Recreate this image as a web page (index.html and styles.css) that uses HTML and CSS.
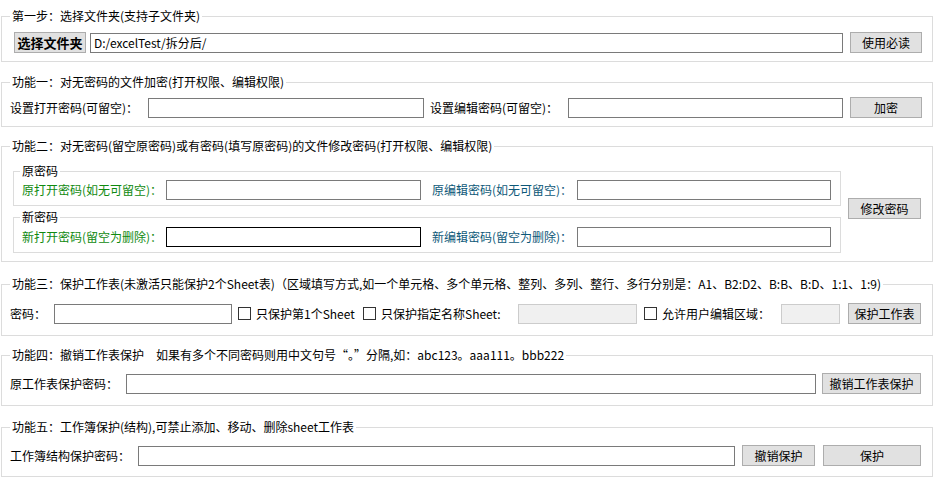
FILE: index.html
```html
<!DOCTYPE html>
<html lang="zh-CN">
<head>
<meta charset="utf-8">
<title>Excel 密码工具</title>
<link rel="stylesheet" href="styles.css">
</head>
<body>
<div class="page">

  <fieldset class="group g1">
    <legend>第一步：选择文件夹(支持子文件夹)</legend>
    <div class="row">
      <button class="btn btn-pick">选择文件夹</button>
      <input class="tb tb-path" type="text" value="D:/excelTest/拆分后/">
      <button class="btn btn-72 gap7">使用必读</button>
    </div>
  </fieldset>

  <fieldset class="group g2">
    <legend>功能一：对无密码的文件加密(打开权限、编辑权限)</legend>
    <div class="row">
      <span class="lbl w138">设置打开密码(可留空)：</span>
      <input class="tb w276" type="text">
      <span class="lbl w138 gap6">设置编辑密码(可留空)：</span>
      <input class="tb grow" type="text">
      <button class="btn btn-72 gap7">加密</button>
    </div>
  </fieldset>

  <fieldset class="group g3">
    <legend>功能二：对无密码(留空原密码)或有密码(填写原密码)的文件修改密码(打开权限、编辑权限)</legend>
    <div class="row">
      <div class="inner-col">
        <fieldset class="inner">
          <legend>原密码</legend>
          <div class="row inner-row">
            <span class="lbl w144 green">原打开密码(如无可留空)：</span>
            <input class="tb w255" type="text">
            <span class="lbl w145 gap11 teal">原编辑密码(如无可留空)：</span>
            <input class="tb w254" type="text">
          </div>
        </fieldset>
        <fieldset class="inner inner-2">
          <legend>新密码</legend>
          <div class="row inner-row inner-row-2">
            <span class="lbl w144 green">新打开密码(留空为删除)：</span>
            <input class="tb w255 tb-focus" type="text">
            <span class="lbl w145 gap11 teal">新编辑密码(留空为删除)：</span>
            <input class="tb w254" type="text">
          </div>
        </fieldset>
      </div>
      <button class="btn btn-73 gap7">修改密码</button>
    </div>
  </fieldset>

  <fieldset class="group g4">
    <legend>功能三：保护工作表(未激活只能保护2个Sheet表)（区域填写方式,如一个单元格、多个单元格、整列、多列、整行、多行分别是：A1、B2:D2、B:B、B:D、1:1、1:9)</legend>
    <div class="row">
      <span class="lbl w44">密码：</span>
      <input class="tb w178" type="text">
      <label class="chk w125 gap6"><input class="cb" type="checkbox">只保护第1个Sheet</label>
      <label class="chk w155"><input class="cb" type="checkbox">只保护指定名称Sheet:</label>
      <input class="tb tb-off w119" type="text" disabled>
      <label class="chk w137 gap7"><input class="cb" type="checkbox">允许用户编辑区域：</label>
      <input class="tb tb-off w59" type="text" disabled>
      <button class="btn btn-73 gap8">保护工作表</button>
    </div>
  </fieldset>

  <fieldset class="group g5">
    <legend>功能四：撤销工作表保护　如果有多个不同密码则用中文句号“。”分隔,如：abc123。aaa111。bbb222</legend>
    <div class="row">
      <span class="lbl w116">原工作表保护密码：</span>
      <input class="tb grow" type="text">
      <button class="btn btn-99 gap6">撤销工作表保护</button>
    </div>
  </fieldset>

  <fieldset class="group g6">
    <legend>功能五：工作簿保护(结构),可禁止添加、移动、删除sheet工作表</legend>
    <div class="row">
      <span class="lbl w128">工作簿结构保护密码：</span>
      <input class="tb w597" type="text">
      <button class="btn btn-73 gap7">撤销保护</button>
      <button class="btn btn-98 gap8">保护</button>
    </div>
  </fieldset>

</div>
</body>
</html>
```

FILE: styles.css
```css
* {
  box-sizing: border-box;
}

html,
body {
  margin: 0;
  padding: 0;
  background: #ffffff;
}

body {
  font-family: "Noto Sans CJK SC", "Liberation Sans", sans-serif;
  font-size: 12px;
  line-height: 14px;
  color: #000000;
}

.page {
  width: 934px;
  padding: 9px 1px 0 1px;
}

/* group boxes */
.group {
  margin: 0;
  padding: 0;
  min-width: 0;
  border: 1px solid #dcdcdc;
}

.group > legend {
  margin-left: 8px;
  padding: 0 2px;
  height: 14px;
  line-height: 14px;
  white-space: nowrap;
}

.g2 { margin-top: 13px; }
.g3 { margin-top: 12px; }
.g4 { margin-top: 15px; }
.g5 { margin-top: 12px; }
.g6 { margin-top: 14px; }

.row {
  display: flex;
  align-items: center;
}

.g1 > .row { padding: 9px 10px 8px 10px; }
.g2 > .row { padding: 8px 10px 8px 8px; }
.g3 > .row { padding: 11px 11px 8px 11px; }
.g4 > .row { padding: 12px 11px 11px 8px; }
.g5 > .row { padding: 11px 11px 11px 8px; }
.g6 > .row { padding: 11px 11px 10px 8px; }

/* nested group boxes */
.inner-col {
  width: 828px;
  display: flex;
  flex-direction: column;
}

.inner {
  margin: 0;
  padding: 0;
  min-width: 0;
  border: 1px solid #dcdcdc;
}

.inner > legend {
  margin-left: 6px;
  padding: 0 2px;
  height: 14px;
  line-height: 14px;
}

.inner-2 {
  margin-top: 4px;
}

.inner-row {
  padding: 2px 9px 5px 8px;
}

.inner-row-2 {
  padding-top: 3px;
}

/* labels */
.lbl {
  white-space: nowrap;
  flex: none;
}

.green { color: #108a10; }
.teal { color: #0d5878; }

.chk {
  display: flex;
  align-items: center;
  white-space: nowrap;
  flex: none;
}

.cb {
  appearance: none;
  -webkit-appearance: none;
  width: 13px;
  height: 13px;
  margin: 0 5px 0 0;
  border: 1px solid #333333;
  background: #ffffff;
  flex: none;
}

/* text boxes */
.tb {
  height: 20px;
  margin: 0;
  padding: 0 3px;
  border: 1px solid #7a7a7a;
  background: #ffffff;
  font-family: inherit;
  font-size: 12px;
  color: #000000;
  flex: none;
  outline: none;
}

.tb-path { flex: 1; min-width: 0; margin-left: 4px; }
.tb-focus { border-color: #000000; }
.tb-off { background: #f0f0f0; border-color: #cccccc; }
.grow { flex: 1; min-width: 0; }

/* buttons */
.btn {
  height: 21px;
  margin: 0;
  padding: 0;
  border: 1px solid #adadad;
  background: #e1e1e1;
  font-family: inherit;
  font-size: 12px;
  color: #000000;
  flex: none;
}

.btn-pick {
  width: 72px;
  margin-left: 2px;
  font-size: 13px;
  font-weight: bold;
}

.btn-72 { width: 72px; }
.btn-73 { width: 73px; }
.btn-98 { width: 98px; }
.btn-99 { width: 99px; }

/* widths */
.w44 { width: 44px; }
.w116 { width: 116px; }
.w119 { width: 119px; }
.w125 { width: 125px; }
.w128 { width: 128px; }
.w137 { width: 137px; }
.w138 { width: 138px; }
.w144 { width: 144px; }
.w145 { width: 145px; }
.w155 { width: 155px; }
.w178 { width: 178px; }
.w254 { width: 254px; }
.w255 { width: 255px; }
.w276 { width: 276px; }
.w59 { width: 59px; }
.w597 { width: 597px; }

/* gaps */
.gap6 { margin-left: 6px; }
.gap7 { margin-left: 7px; }
.gap8 { margin-left: 8px; }
.gap11 { margin-left: 11px; }
```
